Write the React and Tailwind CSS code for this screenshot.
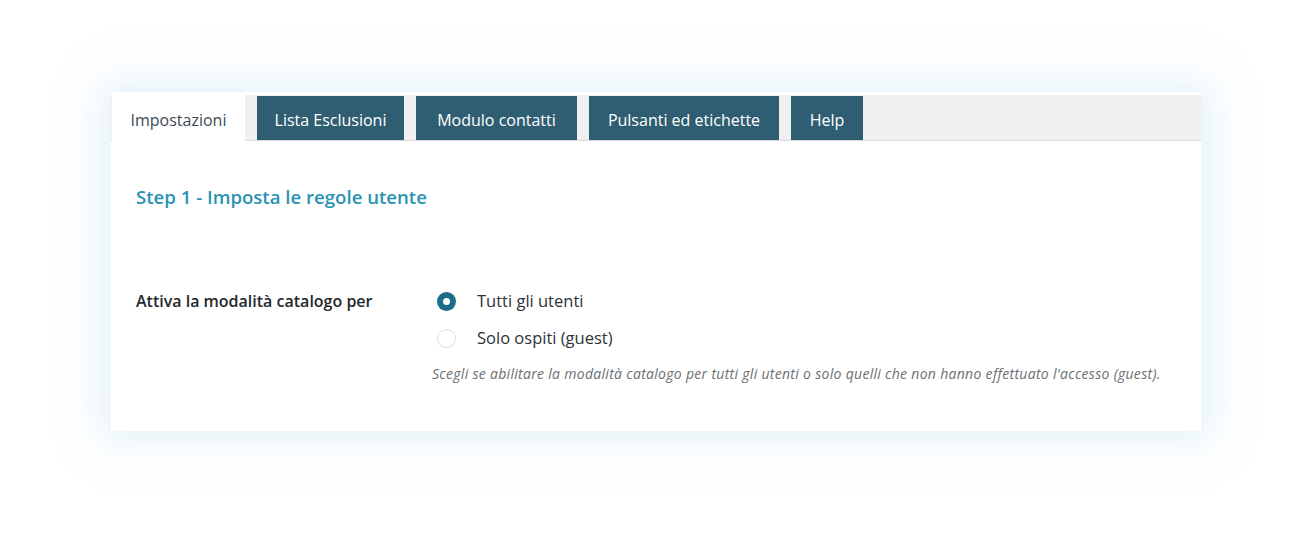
const tabs = [
  { label: "Impostazioni", w: "w-[133px]", active: true },
  { label: "Lista Esclusioni", w: "w-[147px]" },
  { label: "Modulo contatti", w: "w-[161px]" },
  { label: "Pulsanti ed etichette", w: "w-[190px]" },
  { label: "Help", w: "w-[72px]" },
];

function Radio({ checked }) {
  if (checked) {
    return (
      <span className="ml-[5px] flex h-[19px] w-[19px] items-center justify-center rounded-full bg-[#1d6d8a]">
        <span className="h-[7px] w-[7px] rounded-full bg-white" />
      </span>
    );
  }
  return <span className="ml-[5px] block h-[19px] w-[19px] rounded-full border border-[#d9dde0] bg-white" />;
}

export default function App() {
  return (
    <div
      className="h-[541px] w-[1300px] bg-white pl-[111px] pt-[92px]"
      style={{ fontFamily: '"Open Sans", "Noto Sans", sans-serif' }}
    >
      <div className="w-[1090px] bg-white pt-[3px] shadow-[0_0_36px_10px_rgba(205,232,244,0.55)]">
        {/* Tab bar */}
        <div className="flex h-[46px] items-end gap-[12px] border-b border-[#dcdcde] bg-[#f0f0f1] pl-px">
          {tabs.map((t) =>
            t.active ? (
              <div
                key={t.label}
                className={`-mb-px flex h-[46px] items-center justify-center bg-white pt-[3px] text-[16px] text-[#3c4a55] ${t.w}`}
              >
                {t.label}
              </div>
            ) : (
              <div
                key={t.label}
                className={`flex h-[44px] items-center justify-center bg-[#2f5e72] pt-[3px] text-[16px] text-white ${t.w}`}
              >
                {t.label}
              </div>
            )
          )}
        </div>

        {/* Content */}
        <div className="px-[25px] pb-[48px] pt-[44px]">
          <h2 className="text-[18.6px] leading-[24px] font-semibold text-[#2a93b3]">
            Step 1 - Imposta le regole utente
          </h2>

          <div className="mt-[81px] flex">
            <div className="w-[296px] text-[16px] leading-[22px] font-semibold text-[#23282d]">
              Attiva la modalità catalogo per
            </div>
            <div className="flex flex-col">
              <label className="flex h-[22px] items-center gap-[21px] text-[16.5px] text-[#2c3338]">
                <Radio checked />
                Tutti gli utenti
              </label>
              <label className="mt-[15px] flex h-[22px] items-center gap-[21px] text-[16.5px] text-[#2c3338]">
                <Radio />
                Solo ospiti (guest)
              </label>
              <p className="mt-[16px] text-[14px] leading-[18px] tracking-[0.3px] italic text-[#6b6f73]">
                Scegli se abilitare la modalità catalogo per tutti gli utenti o solo quelli che non hanno effettuato l'accesso (guest).
              </p>
            </div>
          </div>
        </div>
      </div>
    </div>
  );
}
